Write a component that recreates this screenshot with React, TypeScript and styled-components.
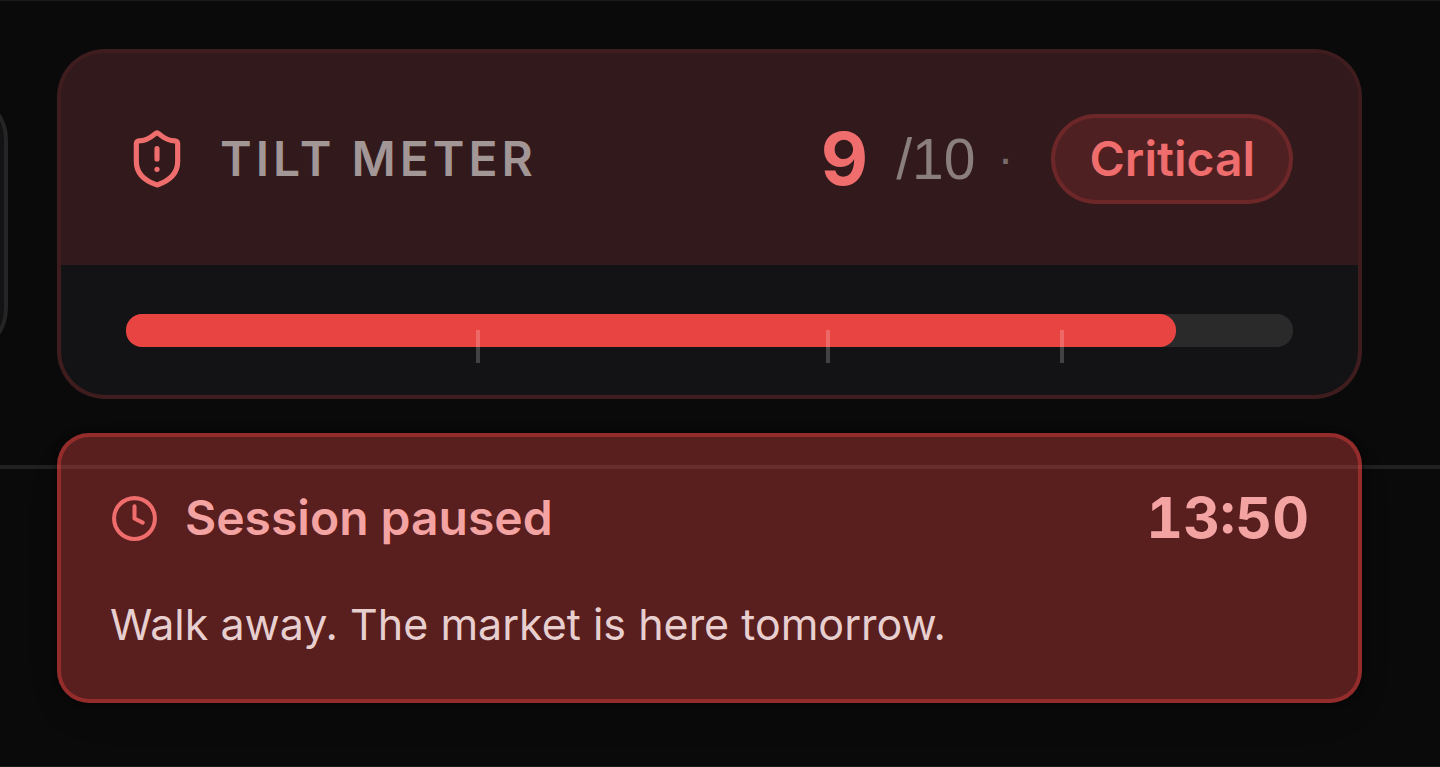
import React from "react";
import styled, { createGlobalStyle } from "styled-components";
import { Clock } from "lucide-react";

const GlobalStyle = createGlobalStyle`
  * { box-sizing: border-box; }
  body {
    margin: 0;
    background: #0a0a0a;
    font-family: Inter, "Liberation Sans", sans-serif;
  }
  h2, p { margin: 0; }
`;

const Page = styled.main`
  border-top: 1px solid #1b1b1b;
  border-bottom: 1px solid #1b1b1b;
`;

const MeterRow = styled.section`
  display: flex;
  align-items: center;
  gap: 49px;
  padding: 48px 78px 66px 0;
  border-bottom: 4px solid #202020;
`;

const NeighbourCard = styled.div`
  flex: none;
  width: 8px;
  height: 264px;
  overflow: hidden;
  display: flex;
  justify-content: flex-end;

  &::before {
    content: "";
    flex: none;
    width: 120px;
    background: #131315;
    border: 4px solid #252525;
    border-radius: 48px;
  }
`;

const MeterCard = styled.article`
  flex: 1;
  overflow: hidden;
  background: #131315;
  border: 4px solid rgba(239, 68, 68, 0.2);
  border-radius: 48px;
`;

const MeterHeader = styled.header`
  display: flex;
  align-items: center;
  justify-content: space-between;
  padding: 61px 65px;
  background: rgba(239, 68, 68, 0.14);
`;

const Group = styled.div<{ $gap: number }>`
  display: flex;
  align-items: center;
  gap: ${(p) => p.$gap}px;
`;

const MeterTitle = styled.h2`
  font-size: 48px;
  line-height: 64px;
  font-weight: 600;
  letter-spacing: 4px;
  text-transform: uppercase;
  color: #a29696;
`;

const Score = styled.div`
  display: flex;
  align-items: center;
`;

const ScoreValue = styled.strong`
  font-size: 73px;
  line-height: 80px;
  font-weight: 700;
  color: #ef6d6d;
`;

const ScoreMax = styled.span`
  margin-left: 28px;
  font-family: "Liberation Sans", Arial, sans-serif;
  font-size: 57px;
  line-height: 64px;
  font-weight: 400;
  color: #8b7e7e;
`;

const Dot = styled.span`
  margin: 0 38px 0 22px;
  font-family: "Liberation Sans", Arial, sans-serif;
  font-size: 48px;
  line-height: 64px;
  color: #786b6b;
`;

const Badge = styled.span`
  padding: 9px 34px;
  border: 4px solid rgba(239, 68, 68, 0.2);
  border-radius: 48px;
  background: rgba(239, 68, 68, 0.15);
  font-size: 48px;
  line-height: 64px;
  font-weight: 600;
  color: #ef6d6d;
`;

const MeterBody = styled.div`
  padding: 49px 65px 48px;
`;

const Track = styled.div`
  position: relative;
  height: 33px;
  border-radius: 16px;
  background: #2a2a2b;
`;

const Fill = styled.div`
  height: 100%;
  border-radius: 16px;
  background: #e84442;
`;

const Tick = styled.span`
  position: absolute;
  top: 16px;
  width: 4px;
  height: 33px;
  background: rgba(255, 255, 255, 0.2);
`;

const AlertRow = styled.section`
  padding: 0 78px 63px 57px;
`;

const Alert = styled.div`
  position: relative;
  margin-top: -36px;
  padding: 45px 49px 43px;
  border: 4px solid rgba(239, 68, 68, 0.4);
  border-radius: 32px;
  background: rgba(239, 68, 68, 0.35);
  box-shadow: 0 0 6px rgba(0, 0, 0, 0.6), 0 16px 48px rgba(0, 0, 0, 0.03);
`;

const AlertHeader = styled.header`
  display: flex;
  align-items: center;
  justify-content: space-between;
`;

const AlertTitle = styled.h2`
  font-size: 48px;
  line-height: 72px;
  font-weight: 600;
  color: #f4a3a3;
`;

const Timer = styled.time`
  font-size: 57px;
  line-height: 72px;
  font-weight: 700;
  font-variant-numeric: tabular-nums;
  color: #f4a3a3;
`;

const AlertText = styled.p`
  margin-top: 38px;
  font-size: 43px;
  line-height: 64px;
  font-weight: 400;
  color: #e8cfcf;
`;

const ShieldIcon = () => (
  <svg width="62" height="62" viewBox="0 0 24 24" fill="none" stroke="#ef6d6d" strokeWidth="2" strokeLinecap="round" strokeLinejoin="round" aria-hidden="true">
    <path d="M20 13c0 5-3.500 7.500-7.660 8.950a1 1 0 0 1-.67-.01C7.500 20.500 4 18 4 13V6a1 1 0 0 1 1-1c2 0 4.500-1.200 6.240-2.720a1.170 1.170 0 0 1 1.520 0C14.510 3.810 17 5 19 5a1 1 0 0 1 1 1z" />
    <path d="M12 8v4" />
    <path d="M12 16h.01" />
  </svg>
);

const thresholds = [30, 60, 80];
const score = 9;

export default function App() {
  return (
    <>
      <GlobalStyle />
      <Page>
        <MeterRow>
          <NeighbourCard />
          <MeterCard>
            <MeterHeader>
              <Group $gap={32}>
                <ShieldIcon />
                <MeterTitle>Tilt meter</MeterTitle>
              </Group>
              <Score>
                <ScoreValue>{score}</ScoreValue>
                <ScoreMax>/10</ScoreMax>
                <Dot>·</Dot>
                <Badge>Critical</Badge>
              </Score>
            </MeterHeader>
            <MeterBody>
              <Track role="meter" aria-label="Tilt" aria-valuemin={0} aria-valuemax={10} aria-valuenow={score}>
                <Fill style={{ width: `${score * 10}%` }} />
                {thresholds.map((t) => (
                  <Tick key={t} style={{ left: `${t}%` }} />
                ))}
              </Track>
            </MeterBody>
          </MeterCard>
        </MeterRow>
        <AlertRow>
          <Alert role="alert">
            <AlertHeader>
              <Group $gap={26}>
                <Clock size={49} color="#ef6d6d" aria-hidden="true" />
                <AlertTitle>Session paused</AlertTitle>
              </Group>
              <Timer>13:50</Timer>
            </AlertHeader>
            <AlertText>Walk away. The market is here tomorrow.</AlertText>
          </Alert>
        </AlertRow>
      </Page>
    </>
  );
}
